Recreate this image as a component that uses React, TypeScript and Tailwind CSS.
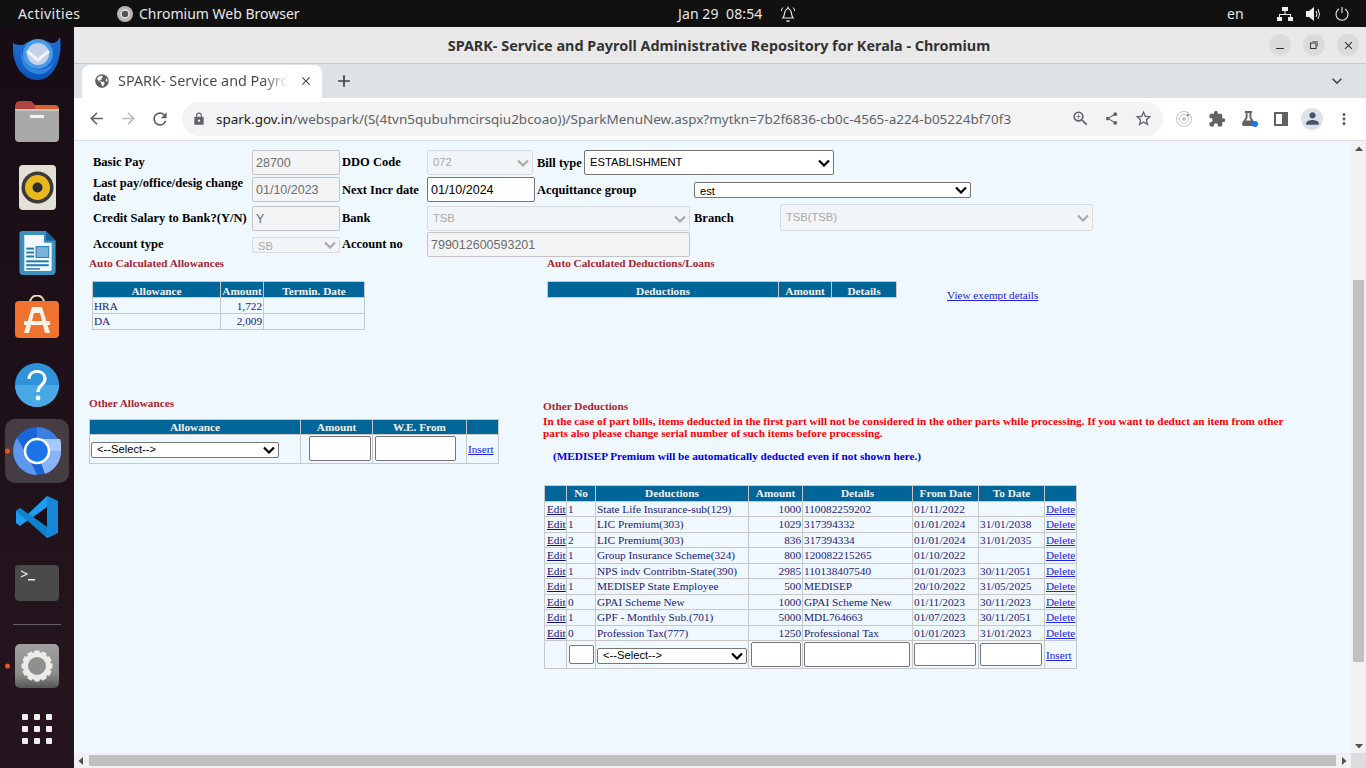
import React from "react";
import { MdArrowBack, MdArrowForward, MdRefresh, MdZoomIn, MdShare, MdStarBorder, MdExtension, MdMoreVert, MdPerson, MdExpandMore, MdAdd, MdClose, MdLock } from "react-icons/md";
import { FaGlobeAmericas, FaFlask } from "react-icons/fa";

const serif = "font-['Liberation_Serif',serif]";
const arial = "font-['Liberation_Sans',sans-serif]";

const Thunderbird = () => (
  <svg width="48" height="43" viewBox="0 0 48 43" className="block">
    <defs><linearGradient id="tb" x1="0" y1="0" x2="0" y2="1"><stop offset="0" stopColor="#1f6fd6" /><stop offset="1" stopColor="#0b56b8" /></linearGradient></defs>
    <path d="M0 6C-2 24 8 43 24 43C40 43 50 24 47 0C44 6 42 6 38 6C30 2 16 2 10 8C6 8 3 8 0 6Z" fill="url(#tb)" />
    <path d="M8 14C6 28 16 38 28 37C36 36 42 28 42 18C42 30 30 34 22 32C14 30 10 22 8 14Z" fill="#2f86e0" />
    <circle cx="25" cy="17" r="15" fill="#4a9ae8" />
    <circle cx="25" cy="17" r="11" fill="#c5d3ea" />
    <path d="M14 14L25 23L36 14" fill="none" stroke="#eef3fa" strokeWidth="3" />
  </svg>
);
const Files = () => (
  <svg width="44" height="41" viewBox="0 0 44 41" className="block">
    <path d="M0 6Q0 0 5 0H16L20 4H39Q44 4 44 9V20H0Z" fill="#b0453f" />
    <path d="M20 4H39Q44 4 44 9V14H20Z" fill="#d8622f" />
    <rect x="0" y="8" width="44" height="33" rx="4" fill="#a9a9a9" />
    <rect x="0" y="8" width="44" height="2" fill="#c4c4c4" />
    <rect x="15" y="14" width="14" height="3" fill="#f2f2f2" />
  </svg>
);
const Rhythmbox = () => (
  <svg width="37" height="45" viewBox="0 0 37 45" className="block">
    <rect width="37" height="45" rx="4" fill="#e4e0d6" />
    <circle cx="18.5" cy="22.5" r="16" fill="#3a3a38" />
    <circle cx="18.5" cy="22.5" r="12.5" fill="#e9b81e" />
    <circle cx="18.5" cy="22.5" r="5" fill="#2e2c28" />
  </svg>
);
const Writer = () => (
  <svg width="37" height="44" viewBox="0 0 37 45" className="block">
    <path d="M3 0H27L37 10V41Q37 45 33 45H4Q0 45 0 41V3Q0 0 3 0Z" fill="#3a90bf" />
    <path d="M27 0L37 10H27Z" fill="#11699e" />
    <path d="M5 4H25V12H33V39Q33 41 31 41H5Z" fill="#f3f7fa" />
    <rect x="7" y="17" width="8" height="2" fill="#1a78b3" />
    <rect x="7" y="21" width="8" height="2" fill="#1a78b3" />
    <rect x="7" y="25" width="8" height="2" fill="#1a78b3" />
    <rect x="17" y="16" width="13" height="11" fill="#7eb2d6" stroke="#1a78b3" />
    <rect x="7" y="30" width="23" height="2" fill="#1a78b3" />
    <rect x="7" y="34" width="23" height="2" fill="#1a78b3" />
    <rect x="7" y="38" width="14" height="1.5" fill="#1a78b3" />
  </svg>
);
const Store = () => (
  <svg width="44" height="43" viewBox="0 0 44 43" className="block">
    <path d="M15 8C15 -2 29 -2 29 8" fill="none" stroke="#ecd9b8" strokeWidth="2" />
    <rect x="0" y="6" width="44" height="37" rx="4" fill="#f0722f" />
    <path d="M17 12H27L35 38H30L25 18H19L14 38H9Z" fill="#fdf3ea" />
    <rect x="9" y="26" width="26" height="4" fill="#fdf3ea" />
  </svg>
);
const Help = () => (
  <svg width="44" height="44" viewBox="0 0 44 44" className="block">
    <circle cx="22" cy="22" r="22" fill="#2f93d9" />
    <path d="M0 22A22 22 0 0 0 44 22Z" fill="#49a8e6" />
    <path d="M14 16C14 6 30 6 30 16C30 22 23 22 23 29" fill="none" stroke="#fff" strokeWidth="3.2" />
    <circle cx="23" cy="35" r="2.4" fill="#fff" />
  </svg>
);
const Chrome = () => (
  <svg width="48" height="48" viewBox="0 0 48 48" className="block">
    <circle cx="24" cy="24" r="24" fill="#1a66d8" />
    <path d="M24 24L48 24A24 24 0 0 1 32 47Z" fill="#8ab4f8" />
    <path d="M24 12H47A24 24 0 0 1 48 24H32Z" fill="#a9c8fa" />
    <path d="M24 0A24 24 0 0 1 45 12H24Z" fill="#3b7de2" />
    <path d="M4 11L17 33L24 48A24 24 0 0 1 4 11Z" fill="#5e97ee" />
    <circle cx="24" cy="24" r="12" fill="#1a73e8" stroke="#fff" strokeWidth="2.5" />
  </svg>
);
const VSCode = () => (
  <svg width="42" height="42" viewBox="0 0 42 42" className="block">
    <path d="M31 0L42 5V37L31 42L12 24L4 30L0 27V15L4 12L12 18Z" fill="#1f9cf0" />
    <path d="M31 0L42 5V37L31 42Z" fill="#1178c4" opacity="0.55" />
    <path d="M31 11L17 21L31 31Z" fill="#1a0f18" />
    <path d="M4 12L31 31V42L0 15Z" fill="#0a7cc6" opacity="0.8" />
  </svg>
);
const Terminal = () => (
  <svg width="44" height="36" viewBox="0 0 44 36" className="block">
    <rect width="44" height="36" rx="4" fill="#4a4a4a" />
    <path d="M6 6L12 9L6 12" fill="none" stroke="#ececec" strokeWidth="1.3" />
    <rect x="13" y="14" width="7" height="1.5" fill="#ececec" />
  </svg>
);
const Gear = () => {
  const teeth = Array.from({ length: 12 }, (_, i) => i * 30);
  return (
    <svg width="44" height="44" viewBox="0 0 44 44" className="block">
      <defs><linearGradient id="gr" x1="0" y1="0" x2="0" y2="1"><stop offset="0" stopColor="#a0a0a0" /><stop offset="0.7" stopColor="#8a8a8a" /><stop offset="1" stopColor="#555" /></linearGradient></defs>
      <rect width="44" height="44" rx="5" fill="url(#gr)" />
      {teeth.map((a) => (
        <rect key={a} x="19.5" y="6.5" width="5" height="6" fill="#ecebe8" transform={`rotate(${a} 22 22)`} />
      ))}
      <circle cx="22" cy="22" r="11.5" fill="#8f8f8f" stroke="#ecebe8" strokeWidth="5" />
    </svg>
  );
};

const Dot = () => <span className="absolute left-[5px] top-1/2 h-[5px] w-[5px] -translate-y-1/2 rounded-full bg-[#e95420]" />;

const Dock = () => (
  <aside className="flex h-full w-[74px] shrink-0 flex-col items-center overflow-hidden bg-gradient-to-b from-[#170d15] to-[#26151f]">
    <div className="mt-[10px]"><Thunderbird /></div>
    <div className="mt-[21px]"><Files /></div>
    <div className="mt-[23px]"><Rhythmbox /></div>
    <div className="mt-[21px]"><Writer /></div>
    <div className="mt-[20px]"><Store /></div>
    <div className="mt-[25px]"><Help /></div>
    <div className="relative mt-[12px] flex h-[64px] w-full items-center justify-center">
      <div className="flex h-[64px] w-[64px] items-center justify-center rounded-[10px] bg-[#463c44]"><Chrome /></div>
      <Dot />
    </div>
    <div className="mt-[13px]"><VSCode /></div>
    <div className="mt-[27px]"><Terminal /></div>
    <div className="mt-[23px] h-px w-[48px] bg-[#6a6068]" />
    <div className="relative mt-[19px] flex h-[44px] w-full justify-center"><Gear /><Dot /></div>
    <div className="mt-[26px] grid grid-cols-3 gap-x-[6px] gap-y-[6px]">
      {Array.from({ length: 9 }).map((_, i) => <span key={i} className="h-[6px] w-[6px] rounded-[1px] bg-[#f0f0f0]" />)}
    </div>
  </aside>
);

const TopBar = () => (
  <header className="flex h-[27px] shrink-0 items-center bg-[#111111] font-['Noto_Sans',sans-serif] text-[14px] text-[#e8e8e8]">
    <span className="ml-[18px] w-[99px] tracking-[0.4px]">Activities</span>
    <svg width="16" height="16" viewBox="0 0 16 16" className="mr-[6px]"><circle cx="8" cy="8" r="8" fill="#b5b5b5" /><circle cx="8" cy="8" r="4" fill="#555" stroke="#e6e6e6" strokeWidth="1.5" /></svg>
    <span className="w-[539px]">Chromium Web Browser</span>
    <span className="w-[102px] tracking-[0.1px]">Jan 29&nbsp; 08:54</span>
    <svg width="16" height="18" viewBox="0 0 16 18" fill="none" stroke="#e8e8e8" strokeWidth="1.2"><path d="M3 13C5 11 3.5 4.5 8 3.5C12.5 4.5 11 11 13 13Z" /><path d="M6.5 15.5Q8 17 9.5 15.5" /><path d="M8 1.5V3.5" /><path d="M1.5 6Q1 4 3 2.5M14.5 6Q15 4 13 2.5" strokeWidth="1" /></svg>
    <span className="ml-[431px] w-[50px]">en</span>
    <svg width="16" height="14" viewBox="0 0 16 14" fill="#f0f0f0"><rect x="5" y="0" width="6" height="4" /><rect x="0" y="10" width="5" height="4" /><rect x="11" y="10" width="5" height="4" /><path d="M7.5 4H8.5V7H14V10H13V8H3V10H2V7H7.5Z" /></svg>
    <svg width="16" height="14" viewBox="0 0 16 14" fill="#f0f0f0" className="ml-[13px]"><path d="M0 4H3L8 0V14L3 10H0Z" /><path d="M10 4Q12 7 10 10M12 2Q15 7 12 12" fill="none" stroke="#f0f0f0" /></svg>
    <svg width="14" height="14" viewBox="0 0 14 14" fill="none" stroke="#f0f0f0" strokeWidth="1.1" className="ml-[13px]"><path d="M4 2A6 6 0 1 0 10 2" /><path d="M7 0V6" /></svg>
  </header>
);

const TitleBar = () => (
  <div className="relative flex h-[37px] shrink-0 items-center justify-center border-b border-[#c8c8c8] bg-[#e9e9e9] pr-[2px] pt-[1px] font-['Noto_Sans',sans-serif] text-[14.4px] font-bold text-[#333]">
    <span>SPARK- Service and Payroll Administrative Repository for Kerala - Chromium</span>
    <div className="absolute right-[7px] top-[7px] flex gap-[12px]">
      <div className="flex h-[22px] w-[22px] items-center justify-center rounded-full bg-[#dbdbdb]"><span className="mt-[7px] h-px w-[8px] bg-[#333]" /></div>
      <div className="flex h-[22px] w-[22px] items-center justify-center rounded-full bg-[#dbdbdb]"><svg width="10" height="10" viewBox="0 0 10 10" fill="none" stroke="#333"><rect x="1.5" y="3" width="5.5" height="5.5" /><path d="M3.5 1.5H8.5V6.5" stroke="#777" /></svg></div>
      <div className="flex h-[22px] w-[22px] items-center justify-center rounded-full bg-[#dbdbdb]"><MdClose size={13} color="#333" /></div>
    </div>
  </div>
);

const TabStrip = () => (
  <div className="flex h-[34px] shrink-0 items-end bg-[#dee1e6] pl-[8px]">
    <div className="flex h-[33px] w-[240px] items-center rounded-t-[8px] bg-white pb-[1px] pl-[13px] font-['Noto_Sans',sans-serif] text-[14.4px] text-[#45494e]">
      <FaGlobeAmericas size={14} color="#5f6368" />
      <span className="ml-[9px] h-[20px] w-[170px] overflow-hidden whitespace-nowrap bg-gradient-to-r from-[#45494e] from-[85%] to-white bg-clip-text leading-[20px] text-transparent">SPARK- Service and Payro</span>
      <MdClose size={14} color="#45494e" className="ml-[11px]" />
    </div>
    <MdAdd size={20} color="#3c4043" className="mb-[7px] ml-[12px]" />
    <MdExpandMore size={20} color="#45494e" className="mb-[7px] ml-auto mr-[19px]" />
  </div>
);

const ToolBar = () => (
  <div className="flex h-[43px] shrink-0 items-center border-b border-[#dadce0] bg-white pb-[1px]">
    <MdArrowBack size={19} color="#5f6368" className="ml-[13px]" />
    <MdArrowForward size={19} color="#b9bcc0" className="ml-[13px]" />
    <MdRefresh size={20} color="#5f6368" className="ml-[12px]" />
    <div className="ml-[12px] flex h-[34px] w-[981px] items-center rounded-full bg-[#f1f3f4] pl-[10px] font-['Noto_Sans',sans-serif] text-[13.48px]">
      <MdLock size={14} color="#5f6368" />
      <span className="ml-[10px] mt-[1px] w-[855px] whitespace-nowrap text-[#5f6368]"><span className="text-[#202124]">spark.gov.in</span>/webspark/(S(4tvn5qubuhmcirsqiu2bcoao))/SparkMenuNew.aspx?mytkn=7b2f6836-cb0c-4565-a224-b05224bf70f3</span>
      <MdZoomIn size={19} color="#5f6368" />
      <MdShare size={15} color="#5f6368" className="ml-[14px]" />
      <MdStarBorder size={19} color="#5f6368" className="ml-[15px]" />
    </div>
    <svg width="18" height="18" viewBox="0 0 18 18" fill="none" stroke="#c4c4c4" className="ml-[12px]"><circle cx="9" cy="9" r="7.5" /><circle cx="9" cy="9" r="4.5" /><circle cx="9" cy="9" r="1.5" fill="#c4c4c4" /><circle cx="13" cy="5" r="1" fill="#666" stroke="none" /></svg>
    <MdExtension size={18} color="#5f6368" className="ml-[15px]" />
    <div className="relative ml-[15px]"><FaFlask size={15} color="#5f6368" /><span className="absolute -bottom-[1px] -right-[2px] h-[6px] w-[6px] rounded-full bg-[#1a73e8]" /></div>
    <svg width="14" height="14" viewBox="0 0 14 14" className="ml-[18px]"><rect width="14" height="14" fill="#5f6368" /><rect x="2" y="2" width="6" height="10" fill="#fff" /></svg>
    <div className="ml-[13px] flex h-[22px] w-[22px] items-center justify-center rounded-full bg-[#dee1e6]"><MdPerson size={19} color="#45546e" /></div>
    <MdMoreVert size={18} color="#5f6368" className="ml-[12px]" />
  </div>
);

const lbl = `${serif} text-[12.5px] font-bold leading-[14px] text-black self-center`;
const disInput = `${arial} text-[12.5px] h-[25px] rounded-[2px] border border-[#c4c4c4] bg-[#f2f4f6] pl-[3px] text-[#6d6d6d]`;
const plainInput = "block rounded-[2px] border border-[#767676] bg-white";

const Sel = ({ w, h, text, disabled, className = "" }: { w: number; h: number; text: string; disabled?: boolean; className?: string }) => (
  <div className={`relative block ${className}`} style={{ width: w, height: h }}>
    <select
      disabled={disabled}
      className={`${arial} block h-full w-full appearance-none rounded-[2px] border pl-[5px] text-[11.2px] ${disabled ? "border-[#d8dce0] bg-[#f2f5f8] text-[#a8a8a8]" : "border-[#767676] bg-white text-black"}`}
    >
      <option>{text}</option>
    </select>
    <svg width="12" height="8" viewBox="0 0 12 8" fill="none" stroke={disabled ? "#a8a8a8" : "#000"} strokeWidth="2.2" className="pointer-events-none absolute right-[4px] top-1/2 -translate-y-1/2">
      <path d="M1 1.5L6 6.5L11 1.5" />
    </svg>
  </div>
);

const FormGrid = () => (
  <div className="ml-[19px] grid grid-cols-[159px_90px_85px_110px_47px_110px_86px_313px] grid-rows-[25px_29px_27px_26px]">
    <span className={`${lbl} -mt-[1px]`}>Basic Pay</span>
    <input readOnly disabled value="28700" className={`${disInput} w-[88px]`} />
    <span className={`${lbl} -mt-[1px]`}>DDO Code</span>
    <Sel disabled w={106} h={25} text="072" />
    <span className={lbl}>Bill type</span>
    <Sel w={250} h={25} text="ESTABLISHMENT" className="col-span-3" />

    <span className={lbl}>Last pay/office/desig change date</span>
    <input readOnly disabled value="01/10/2023" className={`${disInput} mt-[2px] w-[88px]`} />
    <span className={lbl}>Next Incr date</span>
    <input readOnly value="01/10/2024" className={`${arial} mt-[2px] h-[25px] w-[108px] rounded-[2px] border border-[#767676] bg-white pl-[3px] text-[12.5px] text-black`} />
    <span className={`${lbl} col-span-2`}>Acquittance group</span>
    <Sel w={277} h={16} text="est" className="col-span-2 self-center" />

    <span className={lbl}>Credit Salary to Bank?(Y/N)</span>
    <input readOnly disabled value="Y" className={`${disInput} w-[88px] self-end`} />
    <span className={lbl}>Bank</span>
    <Sel disabled w={263} h={25} text="TSB" className="col-span-3 self-end" />
    <span className={lbl}>Branch</span>
    <Sel disabled w={313} h={27} text="TSB(TSB)" className="self-end" />

    <span className={lbl}>Account type</span>
    <Sel disabled w={88} h={16} text="SB" className="mt-[6px]" />
    <span className={lbl}>Account no</span>
    <input readOnly disabled value="799012600593201" className={`${disInput} col-span-3 w-[263px] self-end`} />
  </div>
);

const thBase = "border border-[#c8c8c8] bg-[#006699] p-0 text-center font-bold text-[#f2f2f2]";
const th = `${thBase} pt-[1px]`;
const thTop = `${thBase} pt-[2px]`;
const thFlat = thBase;
const td = "border border-[#c8c8c8] px-[1px] pb-0 pt-[1px] leading-none align-middle";
const tdFlat = "border border-[#c8c8c8] px-[1px] py-0 leading-none align-middle";
const tdLow = "border border-[#c8c8c8] px-[1px] pb-0 pt-[2px] leading-none align-middle";
const tbl = `${serif} table-fixed border-collapse text-[11.25px] leading-[12px] text-[#1c1c78]`;
const sect = `${serif} h-[11px] text-[11.25px] font-bold leading-[11px] text-[#aa2530]`;
const link = "text-[#2222dd] underline";

const Colg = ({ w }: { w: number[] }) => <colgroup>{w.map((x, i) => <col key={i} style={{ width: x }} />)}</colgroup>;

const deductions = [
  ["1", "State Life Insurance-sub(129)", "1000", "110082259202", "01/11/2022", ""],
  ["1", "LIC Premium(303)", "1029", "317394332", "01/01/2024", "31/01/2038"],
  ["2", "LIC Premium(303)", "836", "317394334", "01/01/2024", "31/01/2035"],
  ["1", "Group Insurance Scheme(324)", "800", "120082215265", "01/10/2022", ""],
  ["1", "NPS indv Contribtn-State(390)", "2985", "110138407540", "01/01/2023", "30/11/2051"],
  ["1", "MEDISEP State Employee", "500", "MEDISEP", "20/10/2022", "31/05/2025"],
  ["0", "GPAI Scheme New", "1000", "GPAI Scheme New", "01/11/2023", "30/11/2023"],
  ["1", "GPF - Monthly Sub.(701)", "5000", "MDL764663", "01/07/2023", "30/11/2051"],
  ["0", "Profession Tax(777)", "1250", "Professional Tax", "01/01/2023", "31/01/2023"],
];

const LeftColumn = () => (
  <div className="w-[469px] shrink-0 pl-[15px]">
    <div className={sect}>Auto Calculated Allowances</div>
    <table className={`${tbl} ml-[3px] mt-[12px] w-[272px]`}>
      <Colg w={[128, 43, 101]} />
      <thead><tr className="h-[16px]"><th className={thTop}>Allowance</th><th className={thTop}>Amount</th><th className={thTop}>Termin. Date</th></tr></thead>
      <tbody>
        <tr className="h-[15.5px]"><td className={tdLow}>HRA</td><td className={`${tdLow} text-right`}>1,722</td><td className={td} /></tr>
        <tr className="h-[16px]"><td className={td}>DA</td><td className={`${td} text-right`}>2,009</td><td className={td} /></tr>
      </tbody>
    </table>
    <div className={`${sect} mt-[68px]`}>Other Allowances</div>
    <table className={`${tbl} mt-[10px] w-[409px]`}>
      <Colg w={[211, 72, 94, 32]} />
      <thead><tr className="h-[15px]"><th className={th}>Allowance</th><th className={th}>Amount</th><th className={th}>W.E. From</th><th className={th} /></tr></thead>
      <tbody>
        <tr className="h-[29px]">
          <td className={tdLow}><Sel w={188} h={16} text="<--Select-->" /></td>
          <td className={`${tdFlat} pl-[8px]`}><input className={`${plainInput} h-[25px] w-[62px]`} /></td>
          <td className={`${tdFlat} pl-[2px]`}><input className={`${plainInput} h-[25px] w-[81px]`} /></td>
          <td className={`${tdLow} pl-[1px]`}><a className={link}>Insert</a></td>
        </tr>
      </tbody>
    </table>
  </div>
);

const RightColumn = () => (
  <div className="min-w-0 flex-1">
    <div className={`${sect} ml-[4px]`}>Auto Calculated Deductions/Loans</div>
    <div className="ml-[4px] mt-[12px] flex items-start">
      <table className={`${tbl} w-[349px]`}>
        <Colg w={[231, 53, 65]} />
        <thead><tr className="h-[16px]"><th className={thTop}>Deductions</th><th className={thTop}>Amount</th><th className={thTop}>Details</th></tr></thead>
      </table>
      <a className={`${serif} ${link} ml-[50px] mt-[8px] text-[11.2px] leading-[12px]`}>View exempt details</a>
    </div>
    <div className={`${sect} mt-[100px]`}>Other Deductions</div>
    <p className={`${serif} mt-[3px] w-[745px] text-[11.25px] font-bold leading-[12px] text-[#ff0000]`}>In the case of part bills, items deducted in the first part will not be considered in the other parts while processing. If you want to deduct an item from other parts also please change serial number of such items before processing.</p>
    <p className={`${serif} ml-[10px] mt-[11px] text-[11.25px] font-bold leading-[12px] text-[#0000dd]`}>(MEDISEP Premium will be automatically deducted even if not shown here.)</p>
    <table className={`${tbl} ml-[1px] mt-[23px] w-[532px]`}>
      <Colg w={[22, 29, 153, 54, 110, 66, 66, 32]} />
      <thead>
        <tr className="h-[15.5px]">
          <th className={thFlat} /><th className={thFlat}>No</th><th className={thFlat}>Deductions</th><th className={thFlat}>Amount</th><th className={thFlat}>Details</th><th className={thFlat}>From Date</th><th className={thFlat}>To Date</th><th className={thFlat} />
        </tr>
      </thead>
      <tbody>
        {deductions.map((r, i) => (
          <tr key={i} className="h-[15.5px]">
            <td className={td}><a className="pl-[1px] text-[#10107a] underline">Edit</a></td>
            <td className={td}>{r[0]}</td>
            <td className={td}>{r[1]}</td>
            <td className={`${td} text-right`}>{r[2]}</td>
            <td className={td}>{r[3]}</td>
            <td className={td}>{r[4]}</td>
            <td className={td}>{r[5]}</td>
            <td className={td}><a className={link}>Delete</a></td>
          </tr>
        ))}
        <tr className="h-[28px]">
          <td className={td} />
          <td className={`${tdFlat} pl-[2px]`}><input className={`${plainInput} h-[19px] w-[25px]`} /></td>
          <td className={`${tdLow} pl-[1px]`}><Sel w={150} h={16} text="<--Select-->" /></td>
          <td className={`${tdFlat} pl-[2px]`}><input className={`${plainInput} h-[25px] w-[50px]`} /></td>
          <td className={`${tdFlat} pl-[1px]`}><input className={`${plainInput} h-[25px] w-[106px]`} /></td>
          <td className={`${tdFlat} pl-[1px]`}><input className={`${plainInput} h-[23px] w-[62px]`} /></td>
          <td className={`${tdFlat} pl-[1px]`}><input className={`${plainInput} h-[23px] w-[62px]`} /></td>
          <td className={tdLow}><a className={link}>Insert</a></td>
        </tr>
      </tbody>
    </table>
  </div>
);

const Tri = ({ d }: { d: string }) => <svg width="8" height="8" viewBox="0 0 8 8" fill="#505050"><path d={d} /></svg>;

const VScroll = () => (
  <div className="flex w-[15px] shrink-0 flex-col items-center bg-[#f1f1f1]">
    <div className="flex h-[15px] items-center justify-center"><Tri d="M4 1.5L8 6H0Z" /></div>
    <div className="mt-[124px] h-[382px] w-[11px] bg-[#c1c1c1]" />
    <div className="mt-auto flex h-[15px] items-center justify-center"><Tri d="M0 2H8L4 6.5Z" /></div>
  </div>
);
const HScroll = () => (
  <div className="flex h-[15px] shrink-0 items-center bg-[#f1f1f1]">
    <div className="flex w-[15px] justify-center"><Tri d="M6 0V8L1.5 4Z" /></div>
    <div className="h-[11px] w-[1252px] bg-[#c1c1c1]" />
    <div className="ml-auto flex w-[15px] justify-center"><Tri d="M2 0V8L6.5 4Z" /></div>
    <div className="h-full w-[15px] bg-[#dcdcdc]" />
  </div>
);

export default function App() {
  return (
    <div className="flex h-[768px] w-[1366px] flex-col overflow-hidden">
      <TopBar />
      <div className="flex min-h-0 flex-1">
        <Dock />
        <div className="flex min-w-0 flex-1 flex-col">
          <TitleBar />
          <TabStrip />
          <ToolBar />
          <div className="flex min-h-0 flex-1">
            <main className="min-w-0 flex-1 overflow-hidden bg-[#eff7ff] pt-[9px]">
              <FormGrid />
              <div className="mt-[1px] flex">
                <LeftColumn />
                <RightColumn />
              </div>
            </main>
            <VScroll />
          </div>
          <HScroll />
        </div>
      </div>
    </div>
  );
}
